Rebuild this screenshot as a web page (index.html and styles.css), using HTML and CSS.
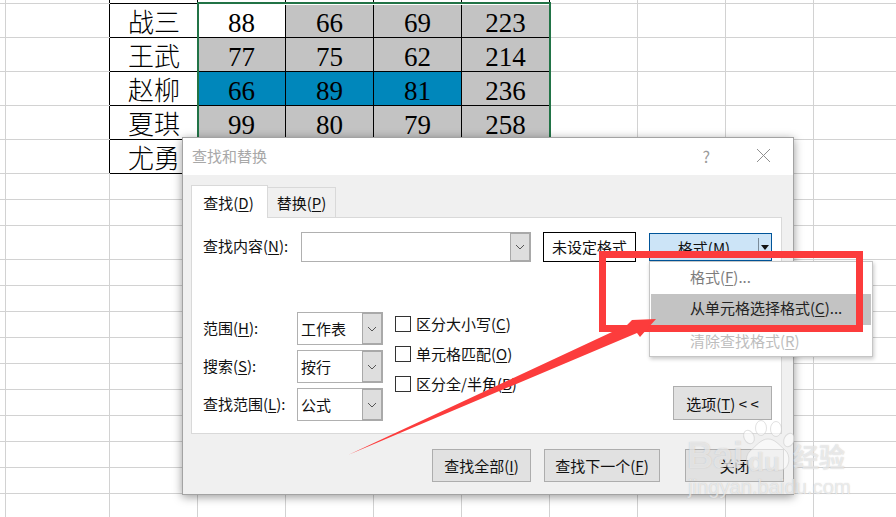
FILE: index.html
```html
<!DOCTYPE html>
<html lang="zh-CN">
<head>
<meta charset="utf-8">
<title>查找和替换</title>
<link rel="stylesheet" href="styles.css">
</head>
<body>
<main class="sheet">
  <div class="row row-top">
    <div class="cell spacer"></div><div class="cell"></div><div class="cell"></div><div class="cell"></div><div class="cell"></div><div class="cell"></div>
  </div>
  <div class="row">
    <div class="cell spacer"></div><div class="cell name">战三</div><div class="cell num">88</div><div class="cell num gray">66</div><div class="cell num gray">69</div><div class="cell num gray">223</div>
  </div>
  <div class="row">
    <div class="cell spacer"></div><div class="cell name">王武</div><div class="cell num gray">77</div><div class="cell num gray">75</div><div class="cell num gray">62</div><div class="cell num gray">214</div>
  </div>
  <div class="row">
    <div class="cell spacer"></div><div class="cell name">赵柳</div><div class="cell num blue">66</div><div class="cell num blue">89</div><div class="cell num blue">81</div><div class="cell num gray">236</div>
  </div>
  <div class="row">
    <div class="cell spacer"></div><div class="cell name">夏琪</div><div class="cell num gray">99</div><div class="cell num gray">80</div><div class="cell num gray">79</div><div class="cell num gray">258</div>
  </div>
  <div class="row">
    <div class="cell spacer"></div><div class="cell name">尤勇</div>
  </div>
  <div class="row row-s"></div>
  <div class="row row-s"></div>
  <div class="row"></div>
  <div class="row row-s"></div>
  <div class="row row-s"></div>
  <div class="row row-s"></div>
  <div class="row row-s"></div>
  <div class="row row-s"></div>
  <div class="row row-s"></div>
  <div class="row row-s"></div>
  <div class="row row-s"></div>
  <div class="row row-s"></div>
  <div class="selection"></div>
</main>

<section class="dialog">
  <header class="titlebar">
    <span class="title">查找和替换</span>
    <span class="help">?</span>
    <svg class="close" width="15" height="15" viewBox="0 0 15 15"><path d="M1 1 14 14M14 1 1 14" fill="none" stroke="#8f8f8f" stroke-width="1"/></svg>
  </header>
  <div class="body">
    <nav class="tabs">
      <span class="tab active">查找(<u>D</u>)</span>
      <span class="tab">替换(<u>P</u>)</span>
    </nav>
    <div class="panel">
      <div class="find-row">
        <label class="label label-find">查找内容(<u>N</u>):</label>
        <div class="combo combo-find">
          <span class="combo-value"></span>
          <span class="combo-arrow"><svg width="10" height="6" viewBox="0 0 10 6"><path d="M1 1 5 5 9 1" fill="none" stroke="#555" stroke-width="1"/></svg></span>
        </div>
        <div class="preview">未设定格式</div>
        <div class="split">
          <span class="split-main">格式(<u>M</u>)</span>
          <span class="split-arrow"><svg width="8" height="5" viewBox="0 0 8 5"><path d="M0 0H8L4 5Z" fill="#111"/></svg></span>
        </div>
      </div>
      <div class="options">
        <div class="selects">
          <div class="select-row">
            <label class="label label-opt">范围(<u>H</u>):</label>
            <div class="combo combo-opt"><span class="combo-value">工作表</span><span class="combo-arrow"><svg width="10" height="6" viewBox="0 0 10 6"><path d="M1 1 5 5 9 1" fill="none" stroke="#555" stroke-width="1"/></svg></span></div>
          </div>
          <div class="select-row">
            <label class="label label-opt">搜索(<u>S</u>):</label>
            <div class="combo combo-opt"><span class="combo-value">按行</span><span class="combo-arrow"><svg width="10" height="6" viewBox="0 0 10 6"><path d="M1 1 5 5 9 1" fill="none" stroke="#555" stroke-width="1"/></svg></span></div>
          </div>
          <div class="select-row">
            <label class="label label-opt">查找范围(<u>L</u>):</label>
            <div class="combo combo-opt"><span class="combo-value">公式</span><span class="combo-arrow"><svg width="10" height="6" viewBox="0 0 10 6"><path d="M1 1 5 5 9 1" fill="none" stroke="#555" stroke-width="1"/></svg></span></div>
          </div>
        </div>
        <div class="checks">
          <div class="check"><span class="box"></span><span class="check-text">区分大小写(<u>C</u>)</span></div>
          <div class="check"><span class="box"></span><span class="check-text">单元格匹配(<u>O</u>)</span></div>
          <div class="check"><span class="box"></span><span class="check-text">区分全/半角(<u>B</u>)</span></div>
        </div>
        <button class="btn btn-options">选项(<u>T</u>) &lt; &lt;</button>
      </div>
    </div>
    <footer class="actions">
      <button class="btn btn-all">查找全部(<u>I</u>)</button>
      <button class="btn btn-next">查找下一个(<u>F</u>)</button>
      <button class="btn btn-close">关闭</button>
    </footer>
  </div>
</section>

<div class="menu">
  <div class="menu-item">格式(<u>F</u>)...</div>
  <div class="menu-item hot">从单元格选择格式(<u>C</u>)...</div>
  <div class="menu-item off">清除查找格式(<u>R</u>)</div>
</div>

<div class="redbox"></div>
<svg class="arrow" width="896" height="517" viewBox="0 0 896 517"><polygon points="348,455 627,325 632,320 656,319 640,337 637,333" fill="#fc3c3c"/></svg>

<div class="watermark">
  <svg class="paw" width="60" height="62" viewBox="0 0 60 62">
    <g fill="#fff" fill-opacity=".55" stroke="#c4c4c4" stroke-opacity=".5" stroke-width="1">
      <ellipse cx="7" cy="17" rx="5" ry="7" transform="rotate(-25 7 17)"/>
      <ellipse cx="19" cy="8" rx="5.5" ry="7.5"/>
      <ellipse cx="34" cy="9" rx="5.5" ry="7.5"/>
      <ellipse cx="47" cy="20" rx="5" ry="7" transform="rotate(25 47 20)"/>
      <path d="M26 19c7 0 11 6 17 11 6 5 5 18-3 20-8 1-10-1-14-1s-8 2-14 1C4 48 2 37 8 31c6-5 11-12 18-12Z"/>
    </g>
  </svg>
  <span class="wm-bai">Bai</span>
  <span class="wm-du">du</span>
  <span class="wm-cn">经验</span>
  <span class="wm-url">jingyan.baidu.com</span>
</div>
</body>
</html>
```
FILE: styles.css
```css
* { box-sizing: border-box; }
html, body { margin: 0; padding: 0; width: 896px; height: 517px; overflow: hidden; background: #fff; }
body { font-family: "Noto Sans CJK SC", "Noto Sans", sans-serif; position: relative; color: #111; }
u { text-underline-offset: 2px; text-decoration-thickness: 1px; }

/* worksheet */
.sheet {
  position: relative;
  height: 517px;
  overflow: hidden;
  background: repeating-linear-gradient(90deg, transparent 0 87px, #d2d2d2 87px 88px) 22px 0;
}
.row {
  height: 34px;
  display: grid;
  grid-template-columns: 22px 88px 88px 88px 88px 88px 88px;
  grid-template-rows: 33px;
  border-bottom: 1px solid #d2d2d2;
}
.row-top { height: 4px; grid-template-rows: 3px; }
.row-s { height: 26px; }
.row:empty { display: block; }
.cell {
  margin-bottom: -1px;
  border-right: 1px solid #000;
  border-bottom: 1px solid #000;
  display: flex;
  align-items: center;
  justify-content: center;
  background: #fff;
  color: #000;
}
.row .spacer { grid-column: 2; background: none; border-bottom: 0; margin-bottom: 0; }
.row-top .cell { background: none; }
.name { font-size: 26px; font-weight: 300; line-height: 33px; padding-left: 1px; }
.num { font-family: "Liberation Serif", serif; font-size: 27px; line-height: 33px; padding-top: 6px; }
.gray { background: #c3c3c3; }
.blue { background: #0087bb; }
.selection {
  position: absolute;
  left: 197px;
  top: 2px;
  width: 354px;
  height: 150px;
  border: 2px solid #217346;
  box-shadow: inset 0 1px 0 #fff;
}

/* dialog */
.dialog {
  position: absolute;
  left: 182px;
  top: 137px;
  width: 612px;
  height: 358px;
  border: 1px solid #a3a3a3;
  background: #f0f0f0;
  box-shadow: 0 2px 9px rgba(0, 0, 0, .4);
  display: flex;
  flex-direction: column;
}
.titlebar {
  height: 37px;
  flex: none;
  background: #fff;
  display: flex;
  align-items: center;
  padding-left: 9px;
  padding-right: 22px;
  padding-bottom: 2px;
}
.title { font-size: 15px; color: #a8a8a8; flex: 1; }
.help { font-size: 16px; color: #9a9a9a; margin-right: 46px; }
.body { flex: 1; padding: 10px 11px 0 8px; }
.tabs { display: flex; align-items: flex-end; height: 32px; }
.tab {
  height: 30px;
  width: 69px;
  border: 1px solid #d9d9d9;
  border-bottom: 0;
  margin-left: -1px;
  font-size: 15px;
  line-height: 30px;
  text-align: center;
  color: #111;
}
.tab:first-child { margin-left: 0; }
.tab.active { height: 33px; width: 77px; background: #fff; margin-bottom: -1px; position: relative; z-index: 1; line-height: 33px; padding-right: 2px; }
.panel {
  height: 217px;
  border: 1px solid #d9d9d9;
  background: #fff;
  padding: 14px 9px 0 11px;
}
.label { font-size: 15px; line-height: 20px; color: #111; white-space: nowrap; padding-bottom: 2px; }
.find-row { display: flex; align-items: center; height: 30px; }
.label-find { width: 98px; flex: none; }
.combo {
  display: flex;
  border: 1px solid #b0b0b0;
  background: #fff;
  flex: none;
}
.combo-find { width: 230px; height: 30px; }
.combo-opt { width: 86px; height: 33px; }
.combo-value { flex: 1; font-size: 15px; line-height: 31px; padding-left: 3px; color: #111; }
.combo-arrow {
  width: 21px;
  margin: -1px -1px -1px 0;
  background: #dedede;
  border: 2px solid #a9a9a9;
  border-left-width: 1px;
  display: flex;
  align-items: center;
  justify-content: center;
}
.preview {
  width: 93px;
  height: 30px;
  margin-left: 12px;
  border: 1px solid #000;
  font-size: 15px;
  line-height: 28px;
  text-align: center;
  color: #111;
  flex: none;
}
.split {
  width: 123px;
  height: 28px;
  margin-left: 13px;
  border: 1px solid #005499;
  background: #cce4f7;
  display: flex;
  align-items: center;
  flex: none;
}
.split-main { flex: 1; font-size: 15px; text-align: center; color: #111; }
.split-arrow {
  width: 13px;
  height: 18px;
  border-left: 1px solid #7a8b99;
  display: flex;
  align-items: center;
  justify-content: center;
}
.options { display: flex; margin-top: 50px; }
.selects { display: flex; flex-direction: column; gap: 5px; flex: none; }
.select-row { display: flex; align-items: center; }
.label-opt { width: 94px; flex: none; }
.checks { display: flex; flex-direction: column; gap: 14px; margin: 4px 0 0 12px; }
.check { display: flex; align-items: center; gap: 5px; height: 16px; font-size: 15px; color: #111; white-space: nowrap; }
.check-text { padding-bottom: 1px; }
.box { width: 16px; height: 16px; border: 1px solid #333; background: #fff; flex: none; }
.btn {
  font-family: inherit;
  font-size: 15px;
  height: 33px;
  width: 99px;
  padding: 0;
  border: 1px solid #adadad;
  background: #e1e1e1;
  color: #111;
  white-space: nowrap;
}
.btn-options { margin-left: auto; align-self: flex-start; margin-top: 74px; height: 34px; }
.actions { display: flex; justify-content: flex-end; gap: 13px; margin-top: 15px; margin-right: -2px; }
.btn-next { width: 116px; }
.btn-close { margin-left: 12px; }

/* drop-down menu */
.menu {
  position: absolute;
  left: 649px;
  top: 261px;
  width: 224px;
  height: 96px;
  background: #fff;
  border: 1px solid #c6c6c6;
  box-shadow: 1px 2px 4px rgba(0, 0, 0, .22);
  padding: 1px;
}
.menu-item { height: 31px; font-size: 15px; line-height: 28px; padding-left: 39px; color: #7d7d7d; }
.menu-item.hot { background: #c3c3c3; color: #222; }
.menu-item.off { color: #bdbdbd; line-height: 31px; }

/* annotation */
.redbox {
  position: absolute;
  left: 599px;
  top: 251px;
  width: 264px;
  height: 81px;
  border: 7px solid #fc3c3c;
}
.arrow { position: absolute; left: 0; top: 0; }

/* watermark */
.watermark { position: absolute; left: 686px; top: 420px; width: 170px; height: 90px; }
.watermark span {
  position: absolute;
  color: rgba(255, 255, 255, .6);
  text-shadow: 0 0 1px rgba(150, 150, 150, .55);
  font-family: "Liberation Sans", sans-serif;
  white-space: nowrap;
}
.paw { position: absolute; left: 56px; top: 0; }
.wm-bai { left: 1px; top: 16px; font-size: 36px; line-height: 40px; font-weight: 700; }
.wm-du { left: 62px; top: 27px; font-size: 26px; line-height: 30px; font-weight: 700; }
.watermark .wm-cn { left: 107px; top: 20px; font-size: 26px; line-height: 32px; font-family: "Noto Sans CJK SC", sans-serif; font-weight: 700; }
.wm-url { left: 2px; top: 55px; font-size: 20.2px; line-height: 24px; }
```
